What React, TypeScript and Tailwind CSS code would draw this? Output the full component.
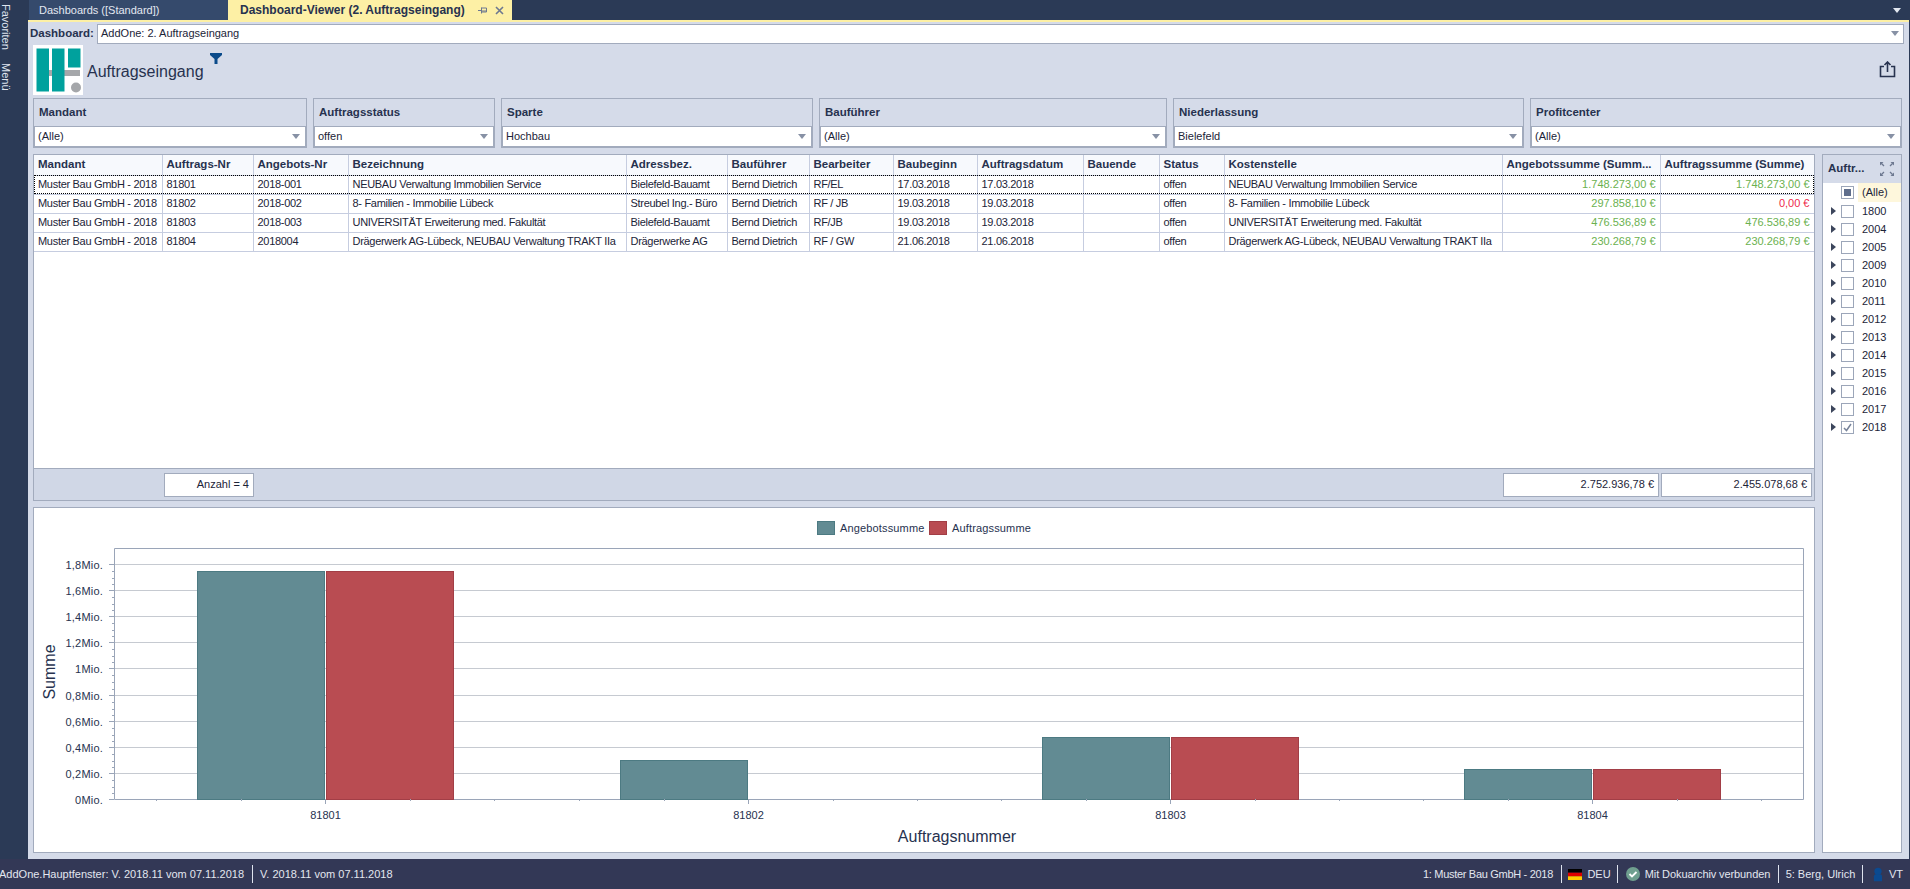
import React from "react";

const rows = [
  ["Muster Bau GmbH - 2018", "81801", "2018-001", "NEUBAU Verwaltung Immobilien Service", "Bielefeld-Bauamt", "Bernd Dietrich", "RF/EL", "17.03.2018", "17.03.2018", "", "offen", "NEUBAU Verwaltung Immobilien Service", "1.748.273,00 €", "1.748.273,00 €"],
  ["Muster Bau GmbH - 2018", "81802", "2018-002", "8- Familien - Immobilie Lübeck", "Streubel Ing.- Büro", "Bernd Dietrich", "RF / JB", "19.03.2018", "19.03.2018", "", "offen", "8- Familien - Immobilie Lübeck", "297.858,10 €", "0,00 €"],
  ["Muster Bau GmbH - 2018", "81803", "2018-003", "UNIVERSITÄT Erweiterung med. Fakultät", "Bielefeld-Bauamt", "Bernd Dietrich", "RF/JB", "19.03.2018", "19.03.2018", "", "offen", "UNIVERSITÄT Erweiterung med. Fakultät", "476.536,89 €", "476.536,89 €"],
  ["Muster Bau GmbH - 2018", "81804", "2018004", "Drägerwerk AG-Lübeck, NEUBAU Verwaltung TRAKT IIa", "Drägerwerke AG", "Bernd Dietrich", "RF / GW", "21.06.2018", "21.06.2018", "", "offen", "Drägerwerk AG-Lübeck, NEUBAU Verwaltung TRAKT IIa", "230.268,79 €", "230.268,79 €"],
];

const headers = ["Mandant", "Auftrags-Nr", "Angebots-Nr", "Bezeichnung", "Adressbez.", "Bauführer", "Bearbeiter", "Baubeginn", "Auftragsdatum", "Bauende", "Status", "Kostenstelle", "Angebotssumme (Summ...", "Auftragssumme (Summe)"];

const years = ["1800", "2004", "2005", "2009", "2010", "2011", "2012", "2013", "2014", "2015", "2016", "2017", "2018"];

const yAxis: [string, number][] = [
  ["1,8Mio.", 564.5], ["1,6Mio.", 590.5], ["1,4Mio.", 616.5], ["1,2Mio.", 642.5], ["1Mio.", 668.5],
  ["0,8Mio.", 695.5], ["0,6Mio.", 721.5], ["0,4Mio.", 747.5], ["0,2Mio.", 773.5], ["0Mio.", 799.5],
];

const bars = [
  { id: "81801", x: 197.5, a: 571.5, b: 571.5 },
  { id: "81802", x: 620.5, a: 760.5, b: 799.5 },
  { id: "81803", x: 1042.5, a: 737.5, b: 737.5 },
  { id: "81804", x: 1464.5, a: 769.5, b: 769.5 },
];

function Caret({ color = "#8791a5" }: { color?: string }) {
  return (
    <svg width="8" height="5" viewBox="0 0 8 5" className="shrink-0">
      <path d="M0 0h8L4 5z" fill={color} />
    </svg>
  );
}

function Combo({ label, value, className }: { label: string; value: string; className: string }) {
  return (
    <div className={"flex flex-col border border-[#a2abbd] border-b-2 " + className}>
      <div className="h-[27px] pl-[5px] flex items-center font-bold text-[11.5px] text-[#27324f]">{label}</div>
      <div className="h-[20px] bg-white border-x border-t border-[#a2abbd] flex items-center justify-between pl-[3px] pr-[5px] text-[#1c2438]">
        <span>{value}</span>
        <Caret />
      </div>
    </div>
  );
}

function Logo() {
  return (
    <svg width="50" height="50" viewBox="0 0 50 50" className="shrink-0">
      <rect width="50" height="50" fill="#fff" />
      <rect x="15" y="25" width="32" height="6" fill="#a5a7aa" />
      <circle cx="43" cy="42.5" r="5" fill="#a5a7aa" />
      <rect x="3.5" y="3.5" width="12.5" height="43" fill="#00a19d" />
      <rect x="19" y="3.5" width="12.5" height="43" fill="#00a19d" />
      <rect x="35" y="3.5" width="12.5" height="19" fill="#00a19d" />
    </svg>
  );
}

function Chart() {
  return (
    <svg viewBox="34 508 1780 344" className="w-[1780px] h-[344px] block" fontFamily="'Liberation Sans', sans-serif">
      <rect x="817.5" y="521.5" width="17" height="13" fill="#628b93" stroke="#4c7a82" />
      <text x="840" y="532" fontSize="11" fill="#27324f" letterSpacing="0.15">Angebotssumme</text>
      <rect x="929.5" y="521.5" width="17" height="13" fill="#b94c52" stroke="#a23e46" />
      <text x="952" y="532" fontSize="11" fill="#27324f" letterSpacing="0.15">Auftragssumme</text>

      <rect x="114.5" y="548.5" width="1689" height="251" fill="#fff" stroke="none" />
      {yAxis.map(([label, y]) => (
        <g key={label}>
          {y < 799 && <line x1="114" x2="1803" y1={y} y2={y} stroke="#c6cad1" />}
          <line x1="109" x2="114" y1={y} y2={y} stroke="#9aa5b8" />
          <text x="103" y={y + 4} textAnchor="end" fontSize="11" fill="#27324f" letterSpacing="0.2">{label}</text>
        </g>
      ))}
      {yAxis.slice(0, -1).map(([label, y], i) =>
        [1, 2, 3].map((k) => {
          const yy = Math.round(y + ((yAxis[i + 1][1] - y) * k) / 4) + 0.5;
          return <line key={label + k} x1="112" x2="114" y1={yy} y2={yy} stroke="#9aa5b8" />;
        })
      )}
      <path d="M114.5 799.5V548.5H1803.5V799.5H114.5" fill="none" stroke="#9aa5b8" />

      {bars.map((b) => (
        <g key={b.id}>
          <rect x={b.x} y={b.a} width="127" height={799.5 - b.a} fill="#628b93" stroke="#4c7a82" />
          {b.b < 799 && <rect x={b.x + 129} y={b.b} width="127" height={799.5 - b.b} fill="#b94c52" stroke="#a23e46" />}
          <line x1={b.x + 128} x2={b.x + 128} y1="799" y2="804" stroke="#9aa5b8" />
          <text x={b.x + 128} y="819" textAnchor="middle" fontSize="11" fill="#27324f">{b.id}</text>
          {[-169, -84, 85, 169].map((d) => (
            <line key={d} x1={b.x + 128 + d} x2={b.x + 128 + d} y1="799" y2="801" stroke="#9aa5b8" />
          ))}
        </g>
      ))}

      <text x="957" y="842" textAnchor="middle" fontSize="16" fill="#27324f">Auftragsnummer</text>
      <text transform="translate(55 672) rotate(-90)" textAnchor="middle" fontSize="16" fill="#27324f">Summe</text>
    </svg>
  );
}

export default function App() {
  return (
    <div className="w-[1910px] h-[889px] overflow-hidden flex flex-col bg-[#2b3a56] text-[11px] text-[#1c2438] font-['Liberation_Sans',sans-serif]">
      <div className="flex h-[859px]">
        {/* Seitenleiste */}
        <div className="w-[28px] shrink-0 bg-[#2b3a56] text-[#dfe4ee] [writing-mode:vertical-rl] flex items-center gap-[13px] pt-[4px] pr-[16px] text-[11px]">
          <span>Favoriten</span>
          <span>Menü</span>
        </div>

        <div className="w-[1881px] flex flex-col">
          {/* Tabs */}
          <div className="h-[20px] flex items-stretch pl-[1px] pr-[8px]">
            <div className="w-[199px] bg-[#354a6c] text-[#e3e8f1] pl-[10px] flex items-center">Dashboards ([Standard])</div>
            <div className="w-[284px] bg-[#fdf0a5] text-[#27324f] pl-[12px] pr-[8px] flex items-center justify-between font-bold text-[12px]">
              <span>Dashboard-Viewer (2. Auftragseingang)</span>
              <span className="flex items-center gap-[8px]">
                <svg width="9" height="9" viewBox="0 0 9 9">
                  <path d="M0 4.5h3M3.5 1.5v6M3.5 2h5v4h-5M3.5 5h5" stroke="#6d7890" fill="none" />
                </svg>
                <svg width="9" height="9" viewBox="0 0 9 9">
                  <path d="M1 1l7 7M8 1l-7 7" stroke="#6d7890" strokeWidth="1.6" />
                </svg>
              </span>
            </div>
            <div className="ml-auto self-center">
              <Caret color="#e3e8f1" />
            </div>
          </div>
          <div className="h-[2px] bg-[#fdf0a5]" />

          {/* Inhalt */}
          <div className="flex-1 bg-[#d5dbe9] flex flex-col pl-[5px] pr-[5px]">
            <div className="h-[22px] flex items-center pt-[1px]">
              <span className="font-bold text-[#27324f] w-[67px] -ml-[3px] text-[11.5px] shrink-0">Dashboard:</span>
              <div className="flex-1 h-[20px] bg-white border border-[#a2abbd] flex items-center justify-between pl-[3px] pr-[4px]">
                <span>AddOne: 2. Auftragseingang</span>
                <Caret />
              </div>
            </div>

            <div className="h-[50px] mt-[1px] flex items-center">
              <Logo />
              <span className="ml-[4px] mt-[3px] text-[16px] text-[#27324f]">Auftragseingang</span>
              <svg width="12" height="11" viewBox="0 0 12 11" className="ml-[6px] -mt-[24px]">
                <path d="M0 0h12v2L7.5 6v5h-3V6L0 2z" fill="#0a4a8a" />
              </svg>
              <svg width="17" height="17" viewBox="0 0 17 17" className="ml-auto mr-[8px] mt-[-1px]" fill="none" stroke="#27324f" strokeWidth="1.6">
                <path d="M5 5.5H1.5v10h14v-10H12" />
                <path d="M8.5 11V1M5.5 4l3-3 3 3" />
              </svg>
            </div>

            {/* Filter */}
            <div className="h-[50px] mt-[3px] flex gap-[6px]">
              <Combo label="Mandant" value="(Alle)" className="w-[274px]" />
              <Combo label="Auftragsstatus" value="offen" className="w-[182px]" />
              <Combo label="Sparte" value="Hochbau" className="w-[312px]" />
              <Combo label="Bauführer" value="(Alle)" className="w-[348px]" />
              <Combo label="Niederlassung" value="Bielefeld" className="w-[351px]" />
              <Combo label="Profitcenter" value="(Alle)" className="w-[372px]" />
            </div>

            <div className="flex-1 mt-[6px] mb-[6px] flex">
              <div className="w-[1782px] flex flex-col gap-[6px]">
                {/* Tabelle */}
                <div className="h-[347px] border border-[#a2abbd] flex flex-col">
                  <div className="flex-1 bg-white overflow-hidden">
                    <table className="table-fixed w-[1780px] border-collapse">
                      <colgroup>
                        <col className="w-[128px]" />
                        <col className="w-[91px]" />
                        <col className="w-[95px]" />
                        <col className="w-[278px]" />
                        <col className="w-[101px]" />
                        <col className="w-[82px]" />
                        <col className="w-[84px]" />
                        <col className="w-[84px]" />
                        <col className="w-[106px]" />
                        <col className="w-[76px]" />
                        <col className="w-[65px]" />
                        <col className="w-[278px]" />
                        <col className="w-[158px]" />
                        <col className="w-[154px]" />
                      </colgroup>
                      <thead>
                        <tr className="h-[20px] bg-[#f7f9fd]">
                          {headers.map((h) => (
                            <th key={h} className="border-r border-b border-[#c6cde0] px-[4px] text-left font-bold text-[11.5px] text-[#27324f] whitespace-nowrap overflow-hidden">
                              {h}
                            </th>
                          ))}
                        </tr>
                      </thead>
                      <tbody>
                        {rows.map((row, r) => (
                          <tr key={row[1]} className={r === 0 ? "h-[19px] outline-1 outline-dotted outline-black -outline-offset-1" : "h-[19px]"}>
                            {row.map((cell, c) => (
                              <td
                                key={c}
                                className={
                                  "border-r border-b border-[#c6cde0] px-[4px] whitespace-nowrap overflow-hidden tracking-[-0.3px] " +
                                  (c < 12 ? "" : cell === "0,00 €" ? "text-right text-[#ee2a4c] tracking-normal" : "text-right text-[#6bb14f] tracking-normal")
                                }
                              >
                                {cell}
                              </td>
                            ))}
                          </tr>
                        ))}
                      </tbody>
                    </table>
                  </div>
                  <div className="h-[32px] border-t border-[#a2abbd] bg-[#d0d7e6] flex items-center pr-[2px]">
                    <div className="ml-[130px] w-[90px] h-[24px] border border-[#a2abbd] bg-white flex items-center justify-end pr-[4px]">Anzahl = 4</div>
                    <div className="ml-auto w-[156px] h-[24px] border border-[#a2abbd] bg-white flex items-center justify-end pr-[4px]">2.752.936,78 €</div>
                    <div className="ml-[2px] w-[151px] h-[24px] border border-[#a2abbd] bg-white flex items-center justify-end pr-[4px]">2.455.078,68 €</div>
                  </div>
                </div>

                {/* Diagramm */}
                <div className="flex-1 border border-[#a2abbd] bg-white">
                  <Chart />
                </div>
              </div>

              {/* Jahre */}
              <div className="ml-[7px] w-[80px] border border-[#a2abbd] bg-white flex flex-col">
                <div className="h-[28px] bg-[#d5dbe9] flex items-center justify-between pl-[5px] pr-[7px] font-bold text-[11.5px] text-[#27324f]">
                  <span>Auftr...</span>
                  <svg width="14" height="14" viewBox="0 0 14 14" fill="#6d7890" stroke="none">
                    <path d="M0 0h3.5L0 3.5zM14 0v3.5L10.5 0zM0 14v-3.5L3.5 14zM14 14h-3.5L14 10.5z" />
                    <path d="M1.5 1.5l2.5 2.5M12.5 1.5L10 4M1.5 12.5L4 10M12.5 12.5L10 10" stroke="#6d7890" strokeWidth="1.3" />
                  </svg>
                </div>
                <div className="h-[19px] flex items-center pl-[18px]">
                  <span className="w-[13px] h-[13px] border border-[#9ca6b9] flex items-center justify-center shrink-0">
                    <span className="w-[7px] h-[7px] bg-[#5f6e8c]" />
                  </span>
                  <span className="ml-[4px] flex-1 h-full bg-[#fef7dc] flex items-center pl-[4px]">(Alle)</span>
                </div>
                {years.map((y) => (
                  <div key={y} className="h-[18px] flex items-center pl-[8px]">
                    <svg width="5" height="8" viewBox="0 0 5 8" className="shrink-0">
                      <path d="M0 0l5 4-5 4z" fill="#3c465c" />
                    </svg>
                    <span className="ml-[5px] w-[13px] h-[13px] border border-[#9ca6b9] flex items-center justify-center shrink-0">
                      {y === "2018" && (
                        <svg width="9" height="9" viewBox="0 0 9 9" fill="none">
                          <path d="M1 5l2.5 2.5L8 1" stroke="#77839a" strokeWidth="1.5" />
                        </svg>
                      )}
                    </span>
                    <span className="ml-[8px]">{y}</span>
                  </div>
                ))}
              </div>
            </div>
          </div>
        </div>
      </div>

      {/* Statusleiste */}
      <div className="h-[30px] bg-[#333856] text-[#e3e7f0] flex items-center overflow-hidden">
        <span className="-ml-[1px] pr-[8px] border-r border-[#dfe3ee] h-[18px] flex items-center">AddOne.Hauptfenster: V. 2018.11 vom 07.11.2018</span>
        <span className="pl-[7px]">V. 2018.11 vom 07.11.2018</span>
        <div className="ml-auto flex items-center pr-[7px]">
          <span className="pr-[8px] border-r border-[#dfe3ee] h-[18px] flex items-center tracking-[-0.3px]">1: Muster Bau GmbH - 2018</span>
          <span className="w-[56px] border-r border-[#dfe3ee] h-[18px] flex items-center justify-center gap-[5px]">
            <svg width="14" height="11" viewBox="0 0 14 11">
              <rect width="14" height="3.7" fill="#000" />
              <rect y="3.7" width="14" height="3.7" fill="#d00" />
              <rect y="7.3" width="14" height="3.7" fill="#fc0" />
            </svg>
            DEU
          </span>
          <span className="w-[161px] border-r border-[#dfe3ee] h-[18px] flex items-center justify-center gap-[5px] tracking-[-0.1px]">
            <svg width="14" height="14" viewBox="0 0 14 14">
              <circle cx="7" cy="7" r="7" fill="#6f9f8f" />
              <path d="M3.5 7l2.5 2.5L10.5 5" fill="none" stroke="#fff" strokeWidth="1.8" />
            </svg>
            Mit Dokuarchiv verbunden
          </span>
          <span className="w-[84px] border-r border-[#dfe3ee] h-[18px] flex items-center justify-center">5: Berg, Ulrich</span>
          <span className="w-[40px] pl-[10px] flex items-center gap-[6px]">
            <svg width="11" height="15" viewBox="0 0 11 15" fill="#0b4a90">
              <circle cx="5.5" cy="4" r="4" />
              <path d="M1 15V9.5C1 8 2.5 7 5.5 7S10 8 10 9.5V15z" />
            </svg>
            VT
          </span>
        </div>
      </div>
    </div>
  );
}
